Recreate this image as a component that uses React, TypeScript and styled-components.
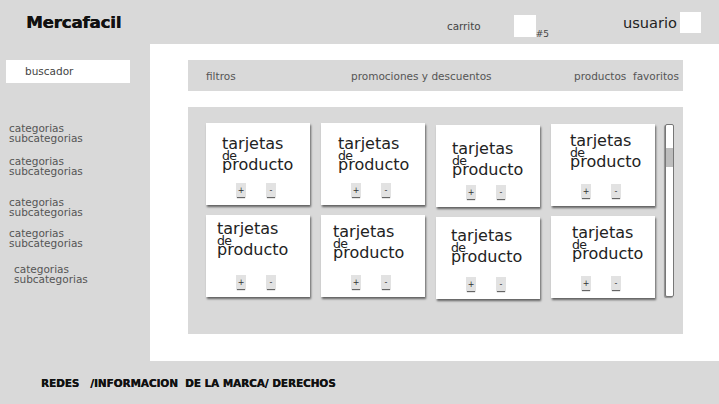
import styled, { createGlobalStyle } from "styled-components";

const GlobalStyle = createGlobalStyle`
  html, body {
    margin: 0;
    padding: 0;
    background: #d9d9d9;
  }
  * {
    box-sizing: border-box;
  }
`;

const categories = [
  { top: 40, indent: 3 },
  { top: 13, indent: 3 },
  { top: 21, indent: 3 },
  { top: 11, indent: 3 },
  { top: 16, indent: 8 },
];

// small offsets copied from the hand-made mockup
const cards = [
  { shift: 0, tx: 16, ty: 16 },
  { shift: 0, tx: 17, ty: 16 },
  { shift: 2, tx: 16, ty: 19 },
  { shift: 1, tx: 19, ty: 12 },
  { shift: 0, tx: 11, ty: 9 },
  { shift: 0, tx: 12, ty: 12 },
  { shift: 2, tx: 15, ty: 14 },
  { shift: 1, tx: 21, ty: 12 },
];

const Page = styled.div`
  display: grid;
  grid-template-columns: 150px 1fr;
  grid-template-rows: 44px 317px 43px;
  width: 719px;
  height: 404px;
  background: #d9d9d9;
  font-family: "DejaVu Sans", sans-serif;
  overflow: hidden;
`;

const Header = styled.header`
  grid-column: 1 / -1;
  display: flex;
  align-items: center;
  padding: 0 18px 0 26px;
`;

const Logo = styled.h1`
  margin: 0;
  font-size: 16.7px;
  font-weight: 700;
  letter-spacing: -0.2px;
  color: #111;
  text-shadow: 0.4px 0 0 #111;
`;

const Cart = styled.div`
  display: flex;
  align-items: center;
  margin-left: auto;
  margin-top: 8px;
  font-size: 10.4px;
  color: #444;
`;

const Badge = styled.span`
  align-self: flex-end;
  margin-bottom: -2px;
  font-size: 9px;
  color: #444;
`;

const User = styled.div`
  display: flex;
  align-items: center;
  margin-left: 74px;
  font-size: 14.6px;
  color: #222;
`;

const WhiteBox = styled.span<{ $size: number; $gap: number }>`
  display: block;
  width: ${(p) => p.$size}px;
  height: ${(p) => p.$size}px;
  margin-left: ${(p) => p.$gap}px;
  background: #fff;
`;

const Sidebar = styled.aside`
  padding: 16px 0 0 6px;
`;

const Search = styled.div`
  width: 124px;
  height: 23px;
  padding-left: 19px;
  background: #fff;
  font-size: 10.5px;
  line-height: 23px;
  color: #444;
`;

const Category = styled.div<{ $top: number; $indent: number }>`
  margin-top: ${(p) => p.$top}px;
  padding-left: ${(p) => p.$indent}px;
  font-size: 10.5px;
  line-height: 10px;
  color: #555;
`;

const Main = styled.main`
  background: #fff;
  padding: 16px 0 0 38px;
`;

const FilterBar = styled.nav`
  display: grid;
  grid-template-columns: 145px 223px 1fr;
  align-items: center;
  width: 495px;
  height: 31px;
  padding-left: 18px;
  background: #d9d9d9;
  font-size: 10.5px;
  color: #555;
  white-space: nowrap;
`;

const ProductArea = styled.section`
  display: flex;
  align-items: flex-start;
  width: 495px;
  height: 227px;
  margin-top: 16px;
  padding: 16px 0 0 18px;
  background: #d9d9d9;
`;

const Grid = styled.div`
  display: grid;
  grid-template-columns: repeat(4, 104px);
  column-gap: 11px;
  row-gap: 8px;
  align-items: start;
`;

const Card = styled.div<{ $shift: number }>`
  display: flex;
  flex-direction: column;
  height: 82px;
  margin-top: ${(p) => p.$shift}px;
  background: #fff;
  box-shadow: 1px 2px 2px rgba(0, 0, 0, 0.55);
`;

const CardText = styled.div<{ $tx: number; $ty: number }>`
  padding: ${(p) => p.$ty}px 0 0 ${(p) => p.$tx}px;
  color: #222;
`;

const Line = styled.div<{ $small?: boolean }>`
  font-size: ${(p) => (p.$small ? 12.5 : 16)}px;
  line-height: ${(p) => (p.$small ? 9 : 10.5)}px;
  padding-top: ${(p) => (p.$small ? 1 : 0)}px;
  letter-spacing: ${(p) => (p.$small ? -0.6 : 0)}px;
`;

const Buttons = styled.div`
  display: flex;
  gap: 20px;
  margin-top: auto;
  padding: 0 0 8px 30px;
`;

const QtyButton = styled.span`
  display: flex;
  align-items: center;
  justify-content: center;
  width: 10px;
  height: 14px;
  background: #e2e2e2;
  font-size: 8px;
  color: #333;
  box-shadow: 0 2px 1px -1px #666;
`;

const Scrollbar = styled.div`
  width: 9px;
  height: 173px;
  margin: 1px 0 0 10px;
  padding-top: 23px;
  background: #fff;
  border: 1px solid #777;
  border-radius: 2px;
  box-shadow: -1px 1px 1px rgba(0, 0, 0, 0.35);
`;

const Thumb = styled.div`
  height: 19px;
  background: #bdbdbd;
`;

const Footer = styled.footer`
  grid-column: 1 / -1;
  display: flex;
  align-items: center;
  padding-left: 41px;
  font-size: 10.4px;
  font-weight: 700;
  color: #111;
  white-space: pre;
  text-shadow: 0.3px 0 0 #111;
`;

export default function App() {
  return (
    <>
      <GlobalStyle />
      <Page>
        <Header>
          <Logo>Mercafacil</Logo>
          <Cart>
            carrito
            <WhiteBox $size={22} $gap={33} />
            <Badge>#5</Badge>
          </Cart>
          <User>
            usuario
            <WhiteBox $size={21} $gap={3} />
          </User>
        </Header>

        <Sidebar>
          <Search>buscador</Search>
          {categories.map((c, i) => (
            <Category key={i} $top={c.top} $indent={c.indent}>
              categorias
              <br />
              subcategorias
            </Category>
          ))}
        </Sidebar>

        <Main>
          <FilterBar>
            <span>filtros</span>
            <span>promociones y descuentos</span>
            <span>productos&nbsp; favoritos</span>
          </FilterBar>

          <ProductArea>
            <Grid>
              {cards.map((c, i) => (
                <Card key={i} $shift={c.shift}>
                  <CardText $tx={c.tx} $ty={c.ty}>
                    <Line>tarjetas</Line>
                    <Line $small>de</Line>
                    <Line>producto</Line>
                  </CardText>
                  <Buttons>
                    <QtyButton>+</QtyButton>
                    <QtyButton>-</QtyButton>
                  </Buttons>
                </Card>
              ))}
            </Grid>
            <Scrollbar>
              <Thumb />
            </Scrollbar>
          </ProductArea>
        </Main>

        <Footer>{"REDES   /INFORMACION  DE LA MARCA/ DERECHOS"}</Footer>
      </Page>
    </>
  );
}
